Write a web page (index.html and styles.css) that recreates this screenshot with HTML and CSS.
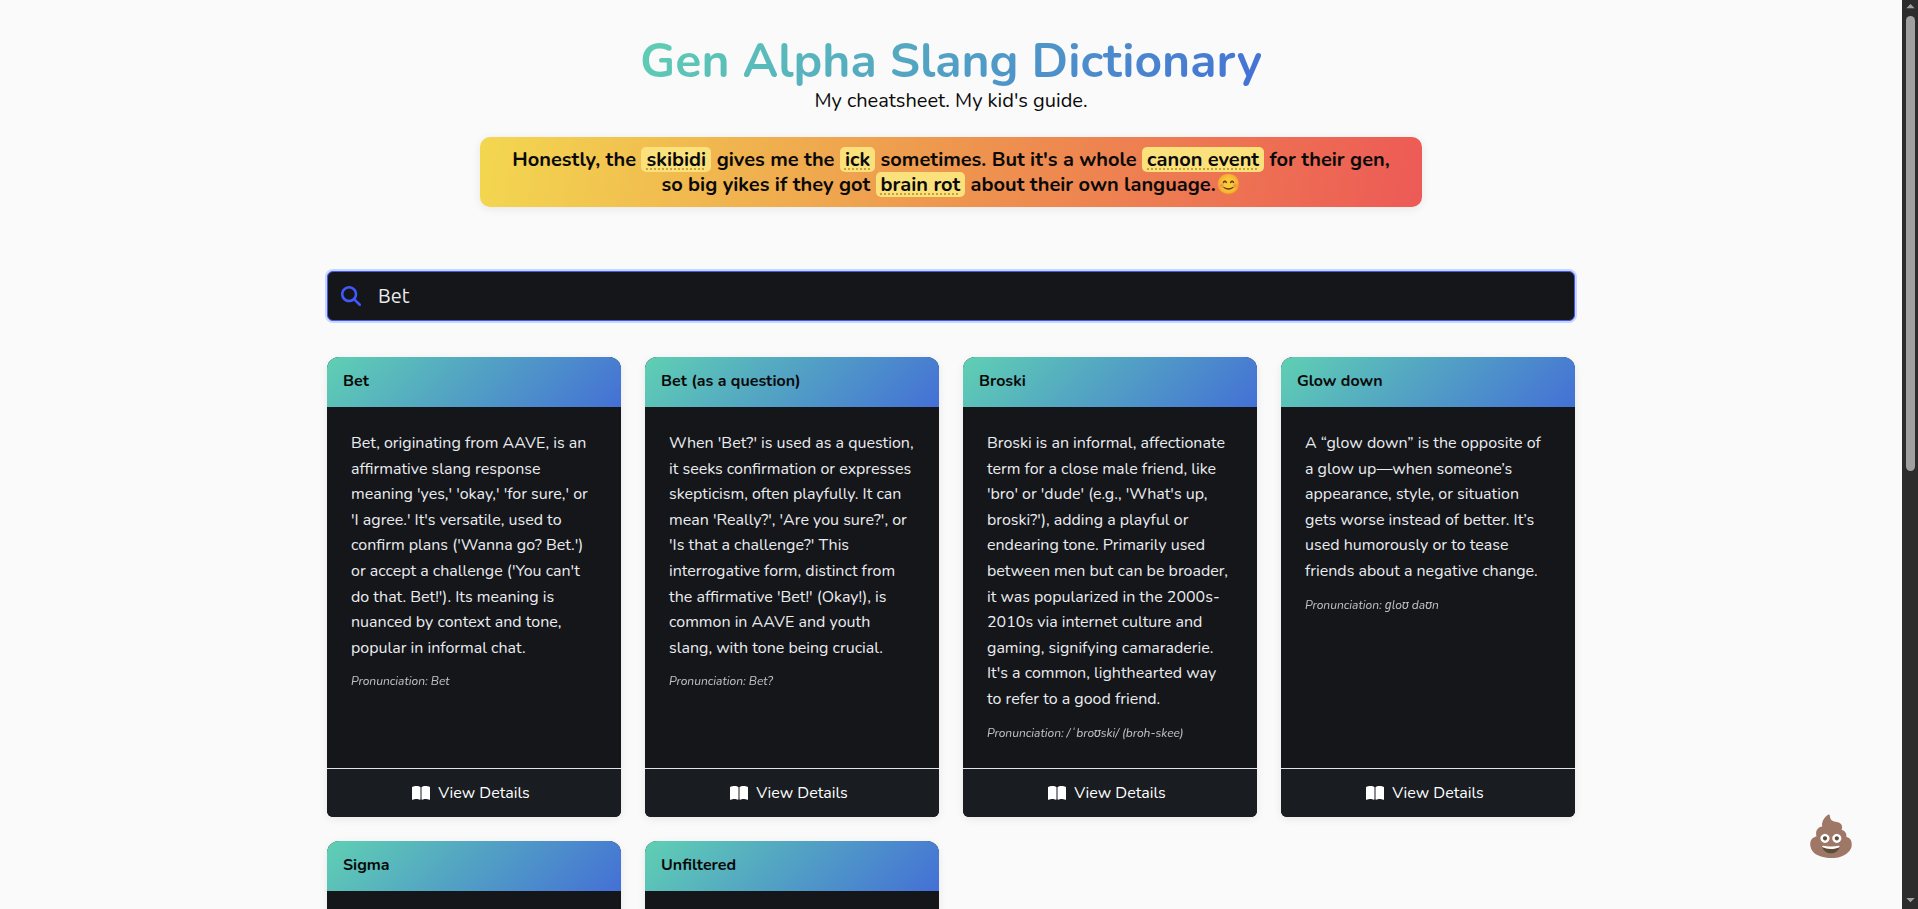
FILE: index.html
```html
<!DOCTYPE html>
<html lang="en">
<head>
<meta charset="utf-8">
<meta name="viewport" content="width=device-width, initial-scale=1">
<title>Gen Alpha Slang Dictionary</title>
<link rel="stylesheet" href="styles.css">
</head>
<body>
<svg class="sprite" aria-hidden="true">
  <symbol id="book" viewBox="0 0 576 512"><path d="M249.6 471.5c10.8 3.8 22.4-4.1 22.4-15.5V78.6c0-4.2-1.6-8.4-5-11C247.4 52 202.4 32 144 32C93.5 32 46.3 45.3 18.1 56.1C6.8 60.5 0 71.7 0 83.8V454.1c0 11.9 12.8 20.2 24.1 16.5C55.6 460.1 105.5 448 144 448c33.9 0 79 14 105.6 23.5zm76.8 0C353 462 398.1 448 432 448c38.5 0 88.4 12.1 119.9 22.6c11.3 3.8 24.1-4.6 24.1-16.5V83.8c0-12.1-6.8-23.3-18.1-27.6C529.7 45.3 482.5 32 432 32c-58.4 0-103.4 20-123 35.6c-3.3 2.6-5 6.8-5 11V456c0 11.4 11.7 19.3 22.4 15.5z"/></symbol>
</svg>
<main class="page">
  <div class="container">
    <header class="hero">
      <h1 class="title">Gen Alpha Slang Dictionary</h1>
      <p class="subtitle">My cheatsheet. My kid's guide.</p>
      <p class="banner">Honestly, the <a class="term" href="#skibidi">skibidi</a> gives me the <a class="term" href="#ick">ick</a> sometimes. But it's a whole <a class="term" href="#canon-event">canon event</a> for their gen,<br>so big yikes if they got <a class="term" href="#brain-rot">brain rot</a> about their own language.<span class="emoji">😊</span></p>
    </header>

    <form class="search" role="search">
      <label class="search-icon" for="query" aria-label="Search slang">
        <svg viewBox="0 0 512 512" aria-hidden="true"><path d="M416 208c0 45.900-14.900 88.300-40 122.700L502.600 457.400c12.500 12.500 12.500 32.800 0 45.300s-32.800 12.500-45.300 0L330.700 376c-34.400 25.200-76.800 40-122.700 40C93.100 416 0 322.900 0 208S93.100 0 208 0S416 93.100 416 208zM208 352a144 144 0 1 0 0-288 144 144 0 1 0 0 288z"/></svg>
      </label>
      <input class="search-input" id="query" type="text" value="Bet">
    </form>

    <section class="grid">
      <article class="card">
        <h2 class="card-title">Bet</h2>
        <div class="card-body">
          <p>Bet, originating from AAVE, is an affirmative slang response meaning 'yes,' 'okay,' 'for sure,' or 'I agree.' It's versatile, used to confirm plans ('Wanna go? Bet.') or accept a challenge ('You can't do that. Bet!'). Its meaning is nuanced by context and tone, popular in informal chat.</p>
          <p class="pron">Pronunciation: Bet</p>
        </div>
        <button class="details" type="button"><svg aria-hidden="true"><use href="#book"/></svg>View Details</button>
      </article>
      <article class="card">
        <h2 class="card-title">Bet (as a question)</h2>
        <div class="card-body">
          <p>When 'Bet?' is used as a question, it seeks confirmation or expresses skepticism, often playfully. It can mean 'Really?', 'Are you sure?', or 'Is that a challenge?' This interrogative form, distinct from the affirmative 'Bet!' (Okay!), is common in AAVE and youth slang, with tone being crucial.</p>
          <p class="pron">Pronunciation: Bet?</p>
        </div>
        <button class="details" type="button"><svg aria-hidden="true"><use href="#book"/></svg>View Details</button>
      </article>
      <article class="card">
        <h2 class="card-title">Broski</h2>
        <div class="card-body">
          <p>Broski is an informal, affectionate term for a close male friend, like 'bro' or 'dude' (e.g., 'What's up, broski?'), adding a playful or endearing tone. Primarily used between men but can be broader, it was popularized in the 2000s-2010s via internet culture and gaming, signifying camaraderie. It's a common, lighthearted way to refer to a good friend.</p>
          <p class="pron">Pronunciation: /ˈbroʊski/ (broh-skee)</p>
        </div>
        <button class="details" type="button"><svg aria-hidden="true"><use href="#book"/></svg>View Details</button>
      </article>
      <article class="card">
        <h2 class="card-title">Glow down</h2>
        <div class="card-body">
          <p>A “glow down” is the opposite of a glow up—when someone’s appearance, style, or situation gets worse instead of better. It’s used humorously or to tease friends about a negative change.</p>
          <p class="pron">Pronunciation: ɡloʊ daʊn</p>
        </div>
        <button class="details" type="button"><svg aria-hidden="true"><use href="#book"/></svg>View Details</button>
      </article>
      <article class="card">
        <h2 class="card-title">Sigma</h2>
        <div class="card-body"></div>
      </article>
      <article class="card">
        <h2 class="card-title">Unfiltered</h2>
        <div class="card-body"></div>
      </article>
    </section>
  </div>
</main>
<div class="scrollbar" aria-hidden="true">
  <svg class="arrow" viewBox="0 0 10 6"><path d="M5 0l5 5H0z"/></svg>
  <div class="track"><div class="thumb"></div></div>
  <svg class="arrow" viewBox="0 0 10 6"><path d="M0 0h10L5 5z"/></svg>
</div>
<button class="poop" type="button" aria-label="Back to top">💩</button>
</body>
</html>
```
FILE: styles.css
```css
* { box-sizing: border-box; margin: 0; }

body {
  display: flex;
  height: 100vh;
  overflow: hidden;
  background: #fafafa;
  color: #0a0a0a;
  font: 16px/24px Nunito, "Noto Sans", sans-serif;
}

.sprite { position: absolute; width: 0; height: 0; }

.page { flex: 1; overflow: hidden; }

.container {
  max-width: 1344px;
  margin: 0 auto;
  padding: 34px 48px;
}

.hero {
  display: flex;
  flex-direction: column;
  align-items: center;
  text-align: center;
}

.title {
  background: linear-gradient(135deg, #5fd0b3, #4470d6);
  background-clip: text;
  -webkit-background-clip: text;
  color: transparent;
  font-size: 48px;
  line-height: 54px;
}

.subtitle { font-size: 20px; line-height: 25px; }

.banner {
  margin-top: 24px;
  padding: 10px 32px;
  border-radius: 10px;
  background: linear-gradient(100deg, #f3d750, #ee964e 50%, #ed5a56);
  box-shadow: 0 2px 10px rgba(10, 10, 10, 0.08);
  font-size: 20px;
  font-weight: 700;
  line-height: 25px;
}

.term {
  display: inline-block;
  padding: 0 5px;
  border-radius: 5px;
  background: #fbe17b;
  color: inherit;
  text-decoration: underline dotted #c4a238 2px;
  text-decoration-skip-ink: none;
  text-underline-offset: 2px;
}

.emoji { opacity: 0.8; }

.search {
  position: relative;
  margin: 64px 0 36px;
}

.search-icon {
  position: absolute;
  inset: 0 auto 0 0;
  display: flex;
  align-items: center;
  padding: 0 0 1px 14px;
}

.search-icon svg { width: 20px; height: 20px; fill: #4258ff; }

.search-input {
  display: block;
  width: 100%;
  height: 50px;
  padding: 0 50px 2px;
  border: 1px solid #4258ff;
  border-radius: 6px;
  outline: none;
  background: #14161a;
  box-shadow: 0 0 0 2px #c9d7f6;
  color: #ebecf0;
  font: 20px Ubuntu, "Noto Sans", sans-serif;
}

.grid {
  display: grid;
  grid-template-columns: repeat(4, 1fr);
  gap: 24px;
}

.card {
  display: flex;
  flex-direction: column;
  overflow: hidden;
  border-radius: 12px 12px 6px 6px;
  background: #14161a;
  box-shadow: 0 2px 8px rgba(10, 10, 10, 0.08);
  color: #ebecf0;
}

.card-title {
  padding: 11px 16px 13px;
  background: linear-gradient(135deg, #5fd0b3, #4470d6);
  color: #0a0a0a;
  font-size: 16px;
  line-height: 26px;
}

.card-body {
  flex: 1;
  min-height: 200px;
  padding: 24px 24px 23px;
  line-height: 1.6;
}

.pron {
  margin-top: 8px;
  opacity: 0.8;
  font-size: 12px;
  font-style: italic;
  line-height: 24px;
}

.details {
  display: flex;
  align-items: center;
  justify-content: center;
  gap: 8px;
  padding: 12px 18px 12px 12px;
  border: 0;
  border-top: 1px solid #dfe5e5;
  background: #191d21;
  color: #fff;
  font: inherit;
}

.details svg { width: 18px; height: 16px; fill: currentColor; }

.scrollbar {
  display: flex;
  flex-direction: column;
  align-items: center;
  gap: 7px;
  width: 16px;
  padding: 4px 0 6px;
  background: #2c2c2c;
}

.arrow { width: 9px; height: 5px; fill: #a0a0a0; }

.track { flex: 1; width: 9px; }

.thumb { height: 52%; border-radius: 5px; background: #a0a0a0; }

.poop {
  position: fixed;
  right: 62px;
  bottom: 48px;
  padding: 0;
  border: 0;
  background: none;
  opacity: 0.8;
  font: 40px/48px Nunito, "Noto Color Emoji", sans-serif;
}
```
